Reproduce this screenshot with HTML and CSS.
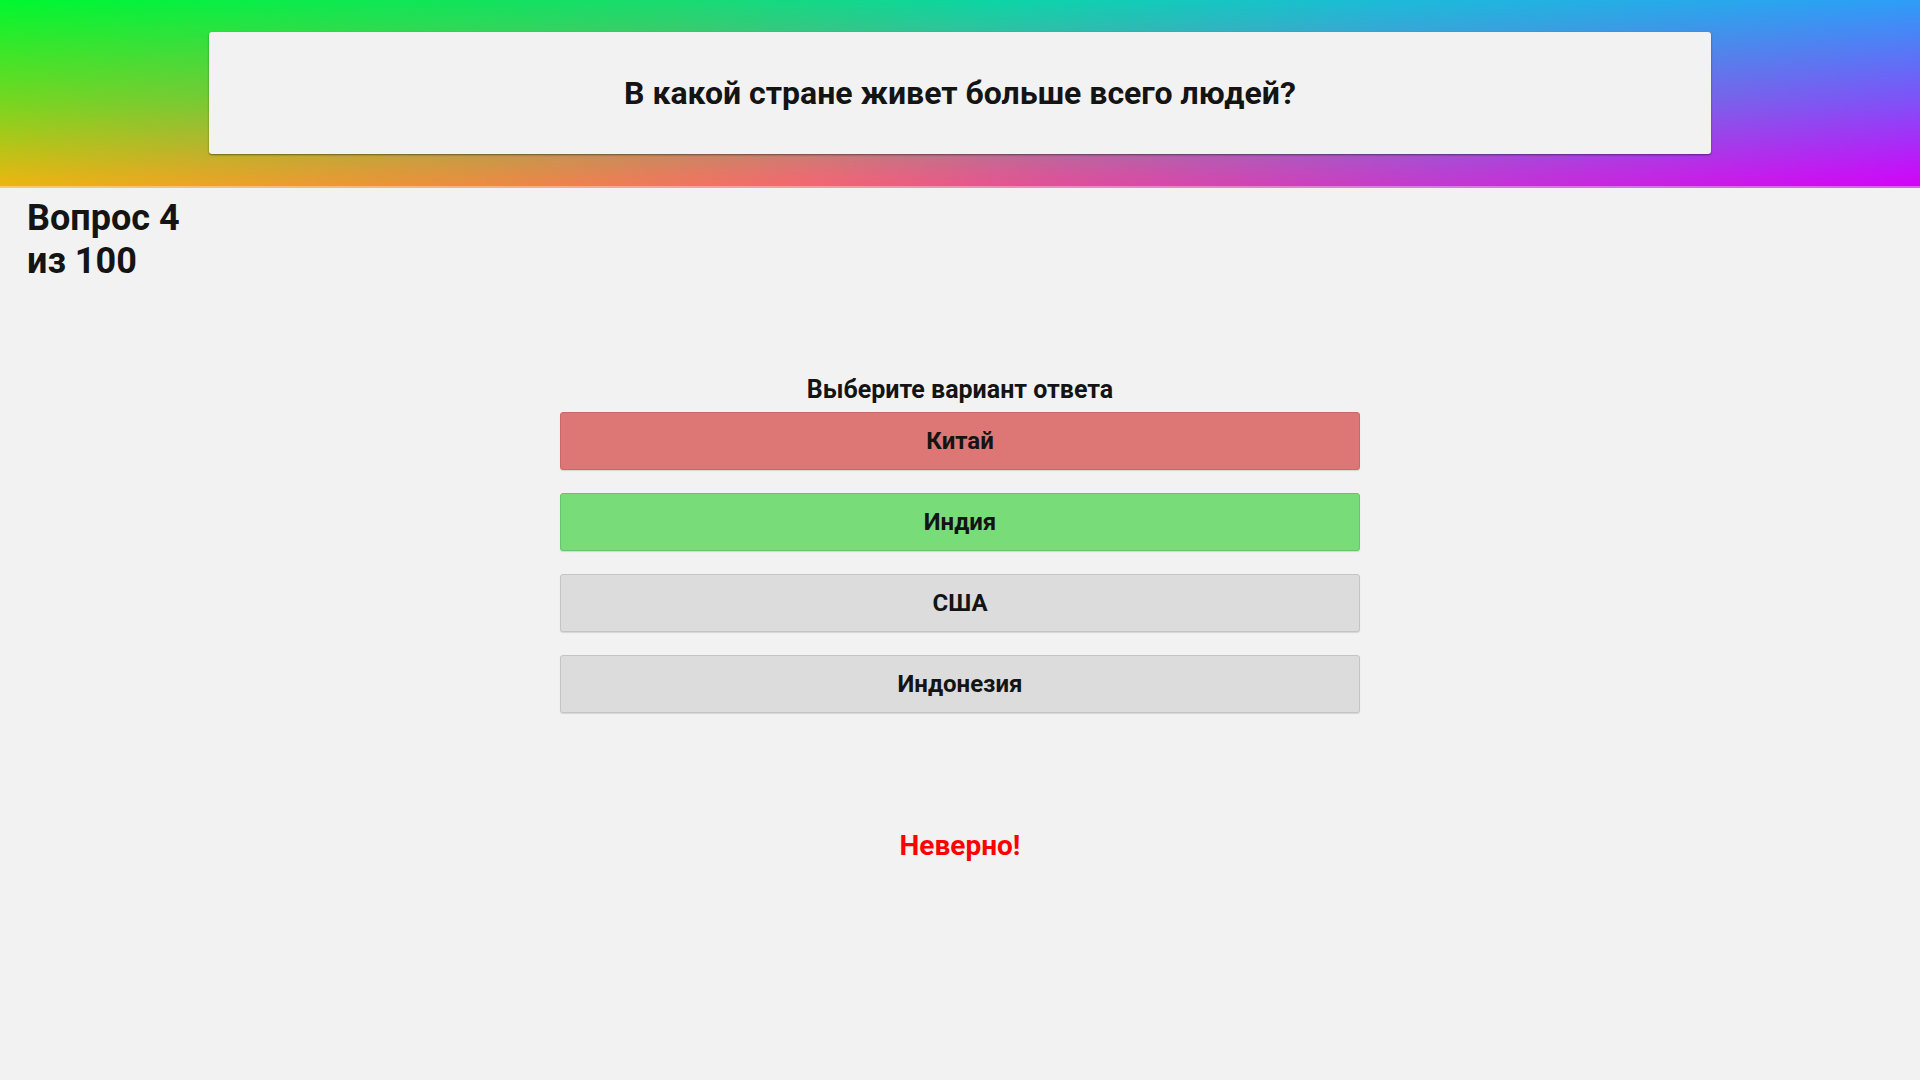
FILE: index.html
```html
<!DOCTYPE html>
<html lang="ru">
<head>
<meta charset="utf-8">
<title>Викторина</title>
<link rel="stylesheet" href="styles.css">
</head>
<body>
<header class="top">
  <div class="question-card">
    <h1 class="question">В какой стране живет больше всего людей?</h1>
  </div>
</header>
<div class="counter">Вопрос 4<br>из 100</div>
<main class="quiz">
  <div class="prompt">Выберите вариант ответа</div>
  <div class="answers">
    <button class="answer wrong">Китай</button>
    <button class="answer right">Индия</button>
    <button class="answer">США</button>
    <button class="answer">Индонезия</button>
  </div>
  <div class="result">Неверно!</div>
</main>
</body>
</html>
```
FILE: styles.css
```css
html, body {
  margin: 0;
  padding: 0;
}
body {
  background: #f2f2f2;
  font-family: Roboto, "Liberation Sans", sans-serif;
  color: #141414;
  width: 1920px;
  height: 1080px;
  overflow: hidden;
}
.top {
  position: relative;
  height: 188px;
  padding-top: 32px;
  box-sizing: border-box;
  background: linear-gradient(to right, #00f830 0%, #18dc70 35%, #0cd6a6 52%, #1cbcd8 72%, #2e9ef8 100%);
}
.top::before {
  content: "";
  position: absolute;
  inset: 0;
  background: linear-gradient(to right, #f0b410 0%, #f08a40 25%, #fa6470 42%, #e64c98 55%, #c636d0 75%, #d600f8 100%);
  -webkit-mask-image: linear-gradient(to bottom, transparent 0%, rgba(0,0,0,0.5) 55%, #000 100%);
  mask-image: linear-gradient(to bottom, transparent 0%, rgba(0,0,0,0.5) 55%, #000 100%);
}
.top::after {
  content: "";
  position: absolute;
  left: 0;
  right: 0;
  bottom: 0;
  height: 2px;
  background: rgba(255,255,255,0.35);
}
.question-card {
  position: relative;
  z-index: 1;
  width: 1502px;
  height: 122px;
  margin: 0 auto;
  background: #f2f2f2;
  border-radius: 3px;
  box-shadow: 0 1px 2px rgba(0,0,0,0.45);
  display: flex;
  align-items: center;
  justify-content: center;
}
.question {
  margin: 0;
  font-size: 32px;
  font-weight: 700;
  color: #141414;
}
.counter {
  margin-top: 9px;
  padding-left: 27px;
  font-size: 36px;
  line-height: 43px;
  font-weight: 700;
  color: #141414;
}
.quiz {
  display: flex;
  flex-direction: column;
  align-items: center;
  margin-top: 92px;
}
.prompt {
  font-size: 25px;
  line-height: 30px;
  font-weight: 700;
  margin-bottom: 7px;
}
.answers {
  display: flex;
  flex-direction: column;
  gap: 23px;
  width: 800px;
}
.answer {
  height: 58px;
  width: 100%;
  border: 1px solid #c4c4c4;
  border-radius: 3px;
  background: #dcdcdc;
  font-family: Roboto, "Liberation Sans", sans-serif;
  font-size: 24px;
  font-weight: 700;
  color: #141414;
  box-shadow: 0 1px 1px rgba(0,0,0,0.12);
  padding: 0;
}
.answer.wrong {
  background: #dc7776;
  border-color: #c86a69;
}
.answer.right {
  background: #78dc78;
  border-color: #68c468;
}
.result {
  margin-top: 117px;
  font-size: 28px;
  line-height: 32px;
  font-weight: 700;
  color: #ff0000;
}
```
